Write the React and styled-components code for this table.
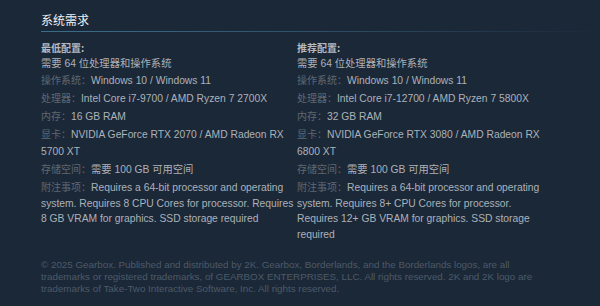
import React from 'react';
import styled, { createGlobalStyle } from 'styled-components';

const GlobalStyle = createGlobalStyle`
  html, body {
    margin: 0;
    padding: 0;
    background: #1b2838;
  }
  body {
    font-family: "Liberation Sans", Arial, "Noto Sans CJK SC", sans-serif;
  }
`;

const minimum = {
    title: '最低配置:',
    rows: [
        { value: '需要 64 位处理器和操作系统' },
        { label: '操作系统：', value: 'Windows 10 / Windows 11' },
        { label: '处理器：', value: 'Intel Core i7-9700 / AMD Ryzen 7 2700X' },
        { label: '内存：', value: '16 GB RAM' },
        { label: '显卡：', value: 'NVIDIA GeForce RTX 2070 / AMD Radeon RX 5700 XT' },
        { label: '存储空间：', value: '需要 100 GB 可用空间' },
        { label: '附注事项：', value: 'Requires a 64-bit processor and operating system. Requires 8 CPU Cores for processor. Requires 8 GB VRAM for graphics. SSD storage required', tight: true },
    ],
};

const recommended = {
    title: '推荐配置:',
    rows: [
        { value: '需要 64 位处理器和操作系统' },
        { label: '操作系统：', value: 'Windows 10 / Windows 11' },
        { label: '处理器：', value: 'Intel Core i7-12700 / AMD Ryzen 7 5800X' },
        { label: '内存：', value: '32 GB RAM' },
        { label: '显卡：', value: 'NVIDIA GeForce RTX 3080 / AMD Radeon RX 6800 XT' },
        { label: '存储空间：', value: '需要 100 GB 可用空间' },
        { label: '附注事项：', value: 'Requires a 64-bit processor and operating system. Requires 8+ CPU Cores for processor. Requires 12+ GB VRAM for graphics. SSD storage required', tight: true },
    ],
};

function ReqColumn({ data }) {
    return (
        <Column>
            <ColTitle>{data.title}</ColTitle>
            <ReqList>
                {data.rows.map((row, i) => (
                    <ReqItem key={i} $tight={row.tight}>
                        {row.label && <Label>{row.label}</Label>}
                        {row.value}
                    </ReqItem>
                ))}
            </ReqList>
        </Column>
    );
}

export default function App() {
    return (
        <>
            <GlobalStyle />
            <Page>
                <Heading>系统需求</Heading>
                <Columns>
                    <ReqColumn data={minimum} />
                    <ReqColumn data={recommended} />
                </Columns>
                <Legal>
                    © 2025 Gearbox. Published and distributed by 2K. Gearbox, Borderlands, and the Borderlands logos, are all trademarks or registered trademarks, of GEARBOX ENTERPRISES, LLC. All rights reserved. 2K and 2K logo are trademarks of Take-Two Interactive Software, Inc. All rights reserved.
                </Legal>
            </Page>
        </>
    );
}

const Page = styled.div`
    width: 516px;
    padding: 12px 0 0 41px;
    box-sizing: content-box;
`

const Heading = styled.h2`
    margin: 0;
    font-family: "Noto Sans CJK SC", sans-serif;
    font-size: 12px;
    line-height: 16px;
    font-weight: normal;
    color: #eef1f4;
    &::after {
        content: '';
        display: block;
        height: 1px;
        margin-top: 3px;
        width: 560px;
        background: linear-gradient(to right, #3b6e8c 0%, #2e4e66 50%, rgba(59, 110, 140, 0) 100%);
    }
`

const Columns = styled.div`
    display: grid;
    grid-template-columns: 254px 254px;
    column-gap: 2px;
    margin-top: 8px;
`

const Column = styled.div`
    font-size: 10.3px;
    color: #acb2b8;
`

const ColTitle = styled.div`
    font-family: "Noto Sans CJK SC", sans-serif;
    font-weight: bold;
    font-size: 10px;
    line-height: 16px;
    color: #b4bac0;
`

const ReqList = styled.ul`
    list-style: none;
    margin: 0;
    padding: 0;
`

const ReqItem = styled.li`
    line-height: ${p => (p.$tight ? '15.5px' : '16.5px')};
    margin-bottom: 1.8px;
    &:first-child {
        margin-bottom: 0;
    }
`

const Label = styled.span`
    color: #5f6872;
    font-size: 10px;
`

const Legal = styled.div`
    margin-top: 14.5px;
    font-family: "Liberation Sans", Arial, sans-serif;
    font-size: 9.8px;
    line-height: 12px;
    color: #4d5a67;
`
